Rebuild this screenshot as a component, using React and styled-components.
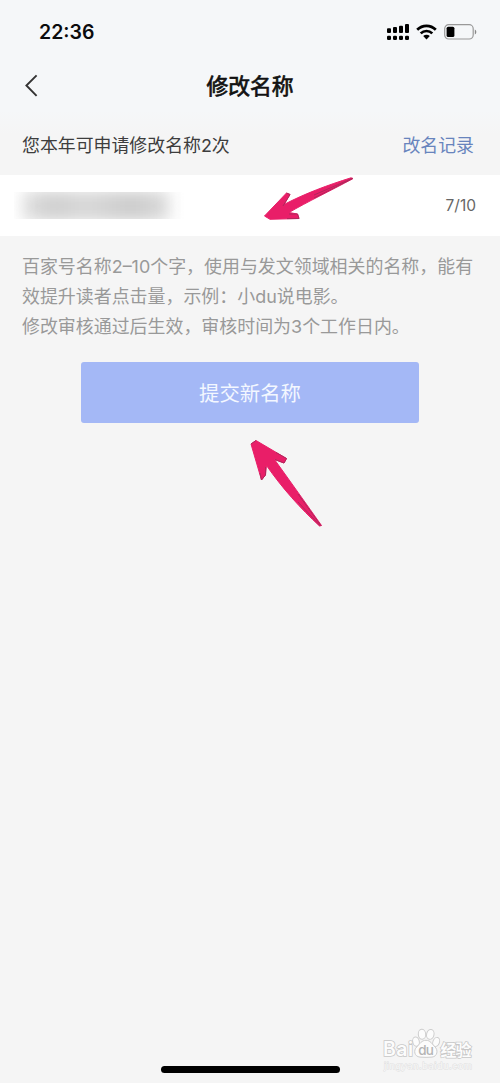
import React from 'react';
import styled, { createGlobalStyle } from 'styled-components';

const GlobalStyle = createGlobalStyle`
    * {
        box-sizing: border-box;
    }
    body {
        margin: 0;
        background: #f5f5f5;
        font-family: Inter, 'Noto Sans CJK SC', sans-serif;
    }
`;

const Page = styled.div`
    position: relative;
    display: flex;
    flex-direction: column;
    width: 500px;
    height: 1083px;
    overflow: hidden;
    background: linear-gradient(#f5f7f9 0, #f5f7f9 110px, #f5f5f5 135px);
`;

const StatusBar = styled.div`
    display: flex;
    align-items: center;
    justify-content: space-between;
    height: 64px;
    padding: 0 23px 0 39px;
`;

const Time = styled.span`
    font-size: 19.5px;
    font-weight: 600;
    color: #0b0b0d;
`;

const StatusIcons = styled.div`
    display: flex;
    align-items: center;
    gap: 7px;
    svg {
        display: block;
    }
`;

const NavBar = styled.header`
    display: grid;
    grid-template-columns: 60px 1fr 60px;
    align-items: center;
    height: 44px;
    svg {
        display: block;
        margin-left: 24px;
    }
`;

const Title = styled.h1`
    margin: 0;
    text-align: center;
    font-size: 21.8px;
    line-height: 44px;
    font-weight: 400;
    -webkit-text-stroke: 0.7px #111;
    color: #111;
`;

const QuotaRow = styled.div`
    display: flex;
    align-items: center;
    justify-content: space-between;
    height: 67px;
    padding: 4px 26px 0 22px;
    font-size: 17.9px;
    color: #3d3d3d;
`;

const HistoryLink = styled.a`
    color: #6884bd;
`;

const NameField = styled.div`
    display: flex;
    align-items: center;
    justify-content: space-between;
    height: 61px;
    padding: 0 24px 0 14px;
    background: #fff;
`;

const MaskedName = styled.div`
    width: 170px;
    height: 27px;
    overflow: hidden;
    &::before {
        content: '';
        display: block;
        width: 146px;
        height: 30px;
        margin: -1px 0 0 9px;
        background: linear-gradient(90deg, #dedede, #cecece 22%, #d8d8d8 42%, #cbcbcb 75%, #dadada);
        filter: blur(8px);
    }
`;

const Counter = styled.span`
    font-size: 15.5px;
    color: #666;
`;

const Hint = styled.div`
    padding: 16px 0 0 22px;
    font-size: 17.95px;
    line-height: 30.2px;
    color: #999;
    white-space: nowrap;
    p {
        margin: 0;
    }
`;

const SubmitButton = styled.button`
    align-self: center;
    width: 338px;
    height: 61px;
    margin-top: 19px;
    padding: 0;
    border: 0;
    border-radius: 3px;
    background: #a4b8f6;
    font-family: inherit;
    font-size: 20.4px;
    color: #f3f7ff;
`;

const HomeIndicator = styled.div`
    align-self: center;
    width: 179px;
    height: 7px;
    margin: auto 0 10px;
    border-radius: 4px;
    background: #000;
`;

const Arrow = styled.svg`
    position: absolute;
    left: ${(props) => props.$left}px;
    top: ${(props) => props.$top}px;
`;

const Watermark = styled.div`
    position: absolute;
    left: 383px;
    top: 1027px;
    width: 92px;
    svg {
        display: block;
        overflow: visible;
    }
`;

const bars = [
    { x: 0, y: 4.3, h: 4.7 },
    { x: 6, y: 3, h: 6 },
    { x: 12, y: 1.7, h: 7.3 },
    { x: 18, y: 0, h: 9 },
];

function SignalIcon() {
    return (
        <svg width="22" height="17" viewBox="0 0 22 17">
            {bars.map((bar) => (
                <g key={bar.x}>
                    <rect x={bar.x} y={bar.y} width="4" height={bar.h} rx="1" />
                    <rect x={bar.x} y="11.7" width="4" height="4.3" rx="1.2" />
                </g>
            ))}
        </svg>
    );
}

function WifiIcon() {
    return (
        <svg width="21" height="16" viewBox="0 0 21 16">
            <g fill="none" stroke="#000" strokeWidth="2.7">
                <path d="M1.2 5.8C6.4.5 14.6.5 19.8 5.8" />
                <path d="M4.7 9.4c3.3-3.2 8.3-3.2 11.6 0" />
            </g>
            <path d="M7.2 12c1.9-1.7 4.7-1.7 6.6 0l-3.3 3.4z" />
        </svg>
    );
}

function BatteryIcon() {
    return (
        <svg width="33" height="16" viewBox="0 0 33 16">
            <rect x=".7" y=".7" width="28.5" height="14.3" rx="4" fill="none" stroke="#999" strokeWidth="1.2" />
            <rect x="2.6" y="2.7" width="7.8" height="10.4" rx="1.6" />
            <path d="M30.8 5.5c2 .7 2 4.2 0 5z" fill="#888" />
        </svg>
    );
}

function BackIcon() {
    return (
        <svg width="15" height="24" viewBox="0 0 15 24" fill="none" stroke="#333" strokeWidth="1.9">
            <path d="M12.6 1.4 2.4 11.5l10.2 10.3" />
        </svg>
    );
}

function PawLogo() {
    return (
        <svg width="92" height="46" viewBox="0 0 92 46">
            <g fill="#fcfcfc" stroke="#cdcdcd" strokeWidth="1">
                <ellipse cx="33" cy="14.6" rx="3.3" ry="4.7" transform="rotate(-12 33 14.6)" />
                <ellipse cx="39" cy="7.3" rx="3.7" ry="5" transform="rotate(-5 39 7.3)" />
                <ellipse cx="47.3" cy="7.4" rx="3.7" ry="5" transform="rotate(12 47.3 7.4)" />
                <ellipse cx="53.2" cy="15" rx="3.3" ry="4.7" transform="rotate(20 53.2 15)" />
                <path d="M43 13.3c4.7 0 5.6 3.6 8.8 6.4 3.6 3.2 2.8 9.8-2.8 10.4-3.8.4-8 .3-12 0-5.8-.5-6.8-6.8-3.2-10.2 3.3-3.2 4.6-6.6 9.2-6.6z" />
            </g>
            <g
                fill="#fcfcfc"
                stroke="#c7c7c7"
                strokeWidth="1.5"
                paintOrder="stroke"
                fontFamily="Inter, 'Noto Sans CJK SC', sans-serif"
            >
                <text x="0" y="28.7" fontSize="19.5" fontWeight="600" textLength="30">Bai</text>
                <text x="35.3" y="28" fontSize="13.5" fontWeight="500" textLength="15.5" fill="#b4b4b4" stroke="none">
                    du
                </text>
                <text x="57.5" y="28.6" fontSize="16" fontWeight="700" textLength="31">经验</text>
            </g>
            <text
                x="1"
                y="42"
                fontSize="9.8"
                textLength="88"
                fill="#f9f9f9"
                stroke="#dedede"
                strokeWidth=".9"
                paintOrder="stroke"
                fontFamily="'Liberation Sans', sans-serif"
            >
                jingyan.baidu.com
            </text>
        </svg>
    );
}

function App() {
    return (
        <>
            <GlobalStyle />
            <Page>
                <StatusBar>
                    <Time>22:36</Time>
                    <StatusIcons>
                        <SignalIcon />
                        <WifiIcon />
                        <BatteryIcon />
                    </StatusIcons>
                </StatusBar>
                <NavBar>
                    <BackIcon />
                    <Title>修改名称</Title>
                </NavBar>
                <QuotaRow>
                    <span>您本年可申请修改名称2次</span>
                    <HistoryLink>改名记录</HistoryLink>
                </QuotaRow>
                <NameField>
                    <MaskedName />
                    <Counter>7/10</Counter>
                </NameField>
                <Hint>
                    <p>百家号名称2–10个字，使用与发文领域相关的名称，能有</p>
                    <p>效提升读者点击量，示例：小du说电影。</p>
                    <p>修改审核通过后生效，审核时间为3个工作日内。</p>
                </Hint>
                <SubmitButton>提交新名称</SubmitButton>
                <HomeIndicator />

                <Arrow $left={262} $top={175} width="94" height="48" viewBox="0 0 94 48">
                    <path
                        d="M2.5 41 24.5 18 28 19.5 22 29.5C43 18.5 66 10 89 2.8L91 3.6C68 16 45 27 27 37.5L35.5 39 37 43.5 8 44.3Z"
                        fill="#e91e68"
                        stroke="#e91e68"
                        strokeLinejoin="round"
                    />
                    <path d="M24.5 18 28 19.5 21 31M27 39 35.5 39 37 43.5 25 43.6M52 20 90.5 3.3M52 23 90.5 3.6" fill="none" stroke="#b0285c" />
                </Arrow>
                <Arrow $left={248} $top={438} width="78" height="92" viewBox="0 0 78 92">
                    <path
                        d="M3 6 8 2.5 38.5 20.5 36 25 26.5 21.5C42 43 59 67 73.5 87.5L71.5 88C53 71 34 50 18.5 27.5L17.5 37 13.5 42Z"
                        fill="#e91e68"
                        stroke="#e91e68"
                        strokeLinejoin="round"
                    />
                    <path d="M3 6 8 2.5M28 14.5 38.5 20.5 36 25 27 21.5M12 35 13.5 42 17.5 37V29M50 56 73 87.7M50 64 72 87.7" fill="none" stroke="#b0285c" />
                </Arrow>
                <Watermark>
                    <PawLogo />
                </Watermark>
            </Page>
        </>
    );
}

export default App;
